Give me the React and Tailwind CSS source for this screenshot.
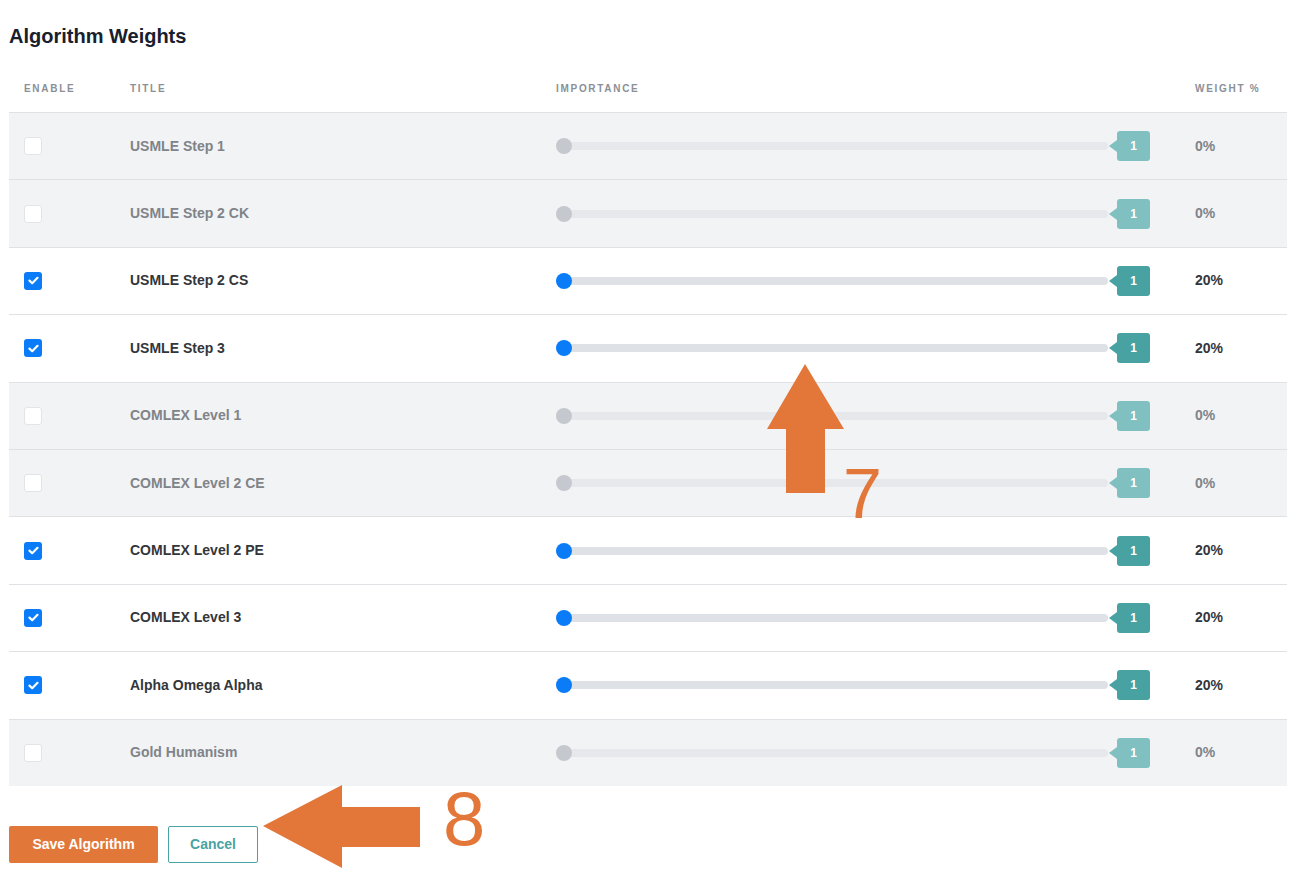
import React from "react";

const rows = [
  { title: "USMLE Step 1", on: false },
  { title: "USMLE Step 2 CK", on: false },
  { title: "USMLE Step 2 CS", on: true },
  { title: "USMLE Step 3", on: true },
  { title: "COMLEX Level 1", on: false },
  { title: "COMLEX Level 2 CE", on: false },
  { title: "COMLEX Level 2 PE", on: true },
  { title: "COMLEX Level 3", on: true },
  { title: "Alpha Omega Alpha", on: true },
  { title: "Gold Humanism", on: false },
];

const Checkbox = ({ checked }) =>
  checked ? (
    <div className="w-[18px] h-[18px] rounded-[3px] bg-[#0a7cf8] flex items-center justify-center">
      <svg width="11" height="9" viewBox="0 0 11 9">
        <path d="M1.5 4.6 L4.2 7.2 L9.5 1.8" fill="none" stroke="#fff" strokeWidth="2.2" strokeLinecap="round" strokeLinejoin="round" />
      </svg>
    </div>
  ) : (
    <div className="w-[18px] h-[18px] rounded-[3px] bg-white border border-[#e2e4e8]" />
  );

const Slider = ({ on }) => (
  <div className="flex items-center">
    <div className="relative w-[552px] h-[8px] flex items-center">
      <div className={`absolute inset-0 rounded-full ${on ? "bg-[#dee1e5]" : "bg-[#e6e8eb]"}`} />
      <div className={`relative w-[16px] h-[16px] rounded-full ${on ? "bg-[#0a7cf8]" : "bg-[#c5c9cf]"}`} />
    </div>
    <div className="flex items-center ml-[1px]">
      <div
        className={`w-0 h-0 border-y-[6px] border-y-transparent border-r-[8px] ${
          on ? "border-r-[#48a2a2]" : "border-r-[#80c0c0]"
        }`}
      />
      <div
        className={`w-[33px] h-[30px] rounded-[3px] flex items-center justify-center text-white text-[12px] font-bold ${
          on ? "bg-[#48a2a2]" : "bg-[#80c0c0]"
        }`}
      >
        1
      </div>
    </div>
  </div>
);

export default function App() {
  return (
    <div
      className="relative w-[1300px] h-[870px] bg-white px-[9px] pt-[22px] overflow-hidden"
      style={{ fontFamily: '"Liberation Sans", Arial, sans-serif' }}
    >
      <h1 className="text-[20px] leading-[28px] font-semibold text-[#18202e]">Algorithm Weights</h1>

      <div className="w-[1278px]">
        <div className="grid grid-cols-[121px_426px_639px_1fr] pt-[33px] pb-[17px] text-[10px] leading-[12px] font-bold tracking-[0.17em] text-[#8b9097]">
          <div className="pl-[15px]">ENABLE</div>
          <div>TITLE</div>
          <div>IMPORTANCE</div>
          <div>WEIGHT %</div>
        </div>

        {rows.map((r) => (
          <div
            key={r.title}
            className={`grid grid-cols-[121px_426px_639px_1fr] items-center h-[67.4px] border-t border-[#dfe1e5] ${
              r.on ? "bg-white" : "bg-[#f2f3f5]"
            }`}
          >
            <div className="pl-[15px]">
              <Checkbox checked={r.on} />
            </div>
            <div className={`text-[14px] font-bold ${r.on ? "text-[#33363b]" : "text-[#808489]"}`}>{r.title}</div>
            <div>
              <Slider on={r.on} />
            </div>
            <div className={`text-[14px] ${r.on ? "font-bold text-[#33363b]" : "font-semibold text-[#808489]"}`}>
              {r.on ? "20%" : "0%"}
            </div>
          </div>
        ))}
      </div>

      <div className="flex gap-[10px] mt-[40px]">
        <button className="w-[149px] h-[37px] rounded-[2px] bg-[#e2773a] text-white text-[14px] font-bold">
          Save Algorithm
        </button>
        <button className="w-[90px] h-[37px] rounded-[2px] border border-[#4aa3a3] bg-white text-[#4aa3a3] text-[14px] font-bold">
          Cancel
        </button>
      </div>

      {/* annotation arrows */}
      <svg className="absolute left-0 top-0 pointer-events-none" width="1300" height="870">
        <polygon points="805,364 844,429 825,429 825,493 786,493 786,429 767,429" fill="#e3773a" />
        <polygon points="263,826 342,785 342,807 420,807 420,847 342,847 342,868" fill="#e3773a" />
      </svg>
      <span className="absolute left-[843px] top-[454px] text-[70px] leading-[80px] text-[#e3773a]">7</span>
      <span className="absolute left-[443px] top-[775px] text-[76px] leading-[88px] text-[#e3773a]">8</span>
    </div>
  );
}
